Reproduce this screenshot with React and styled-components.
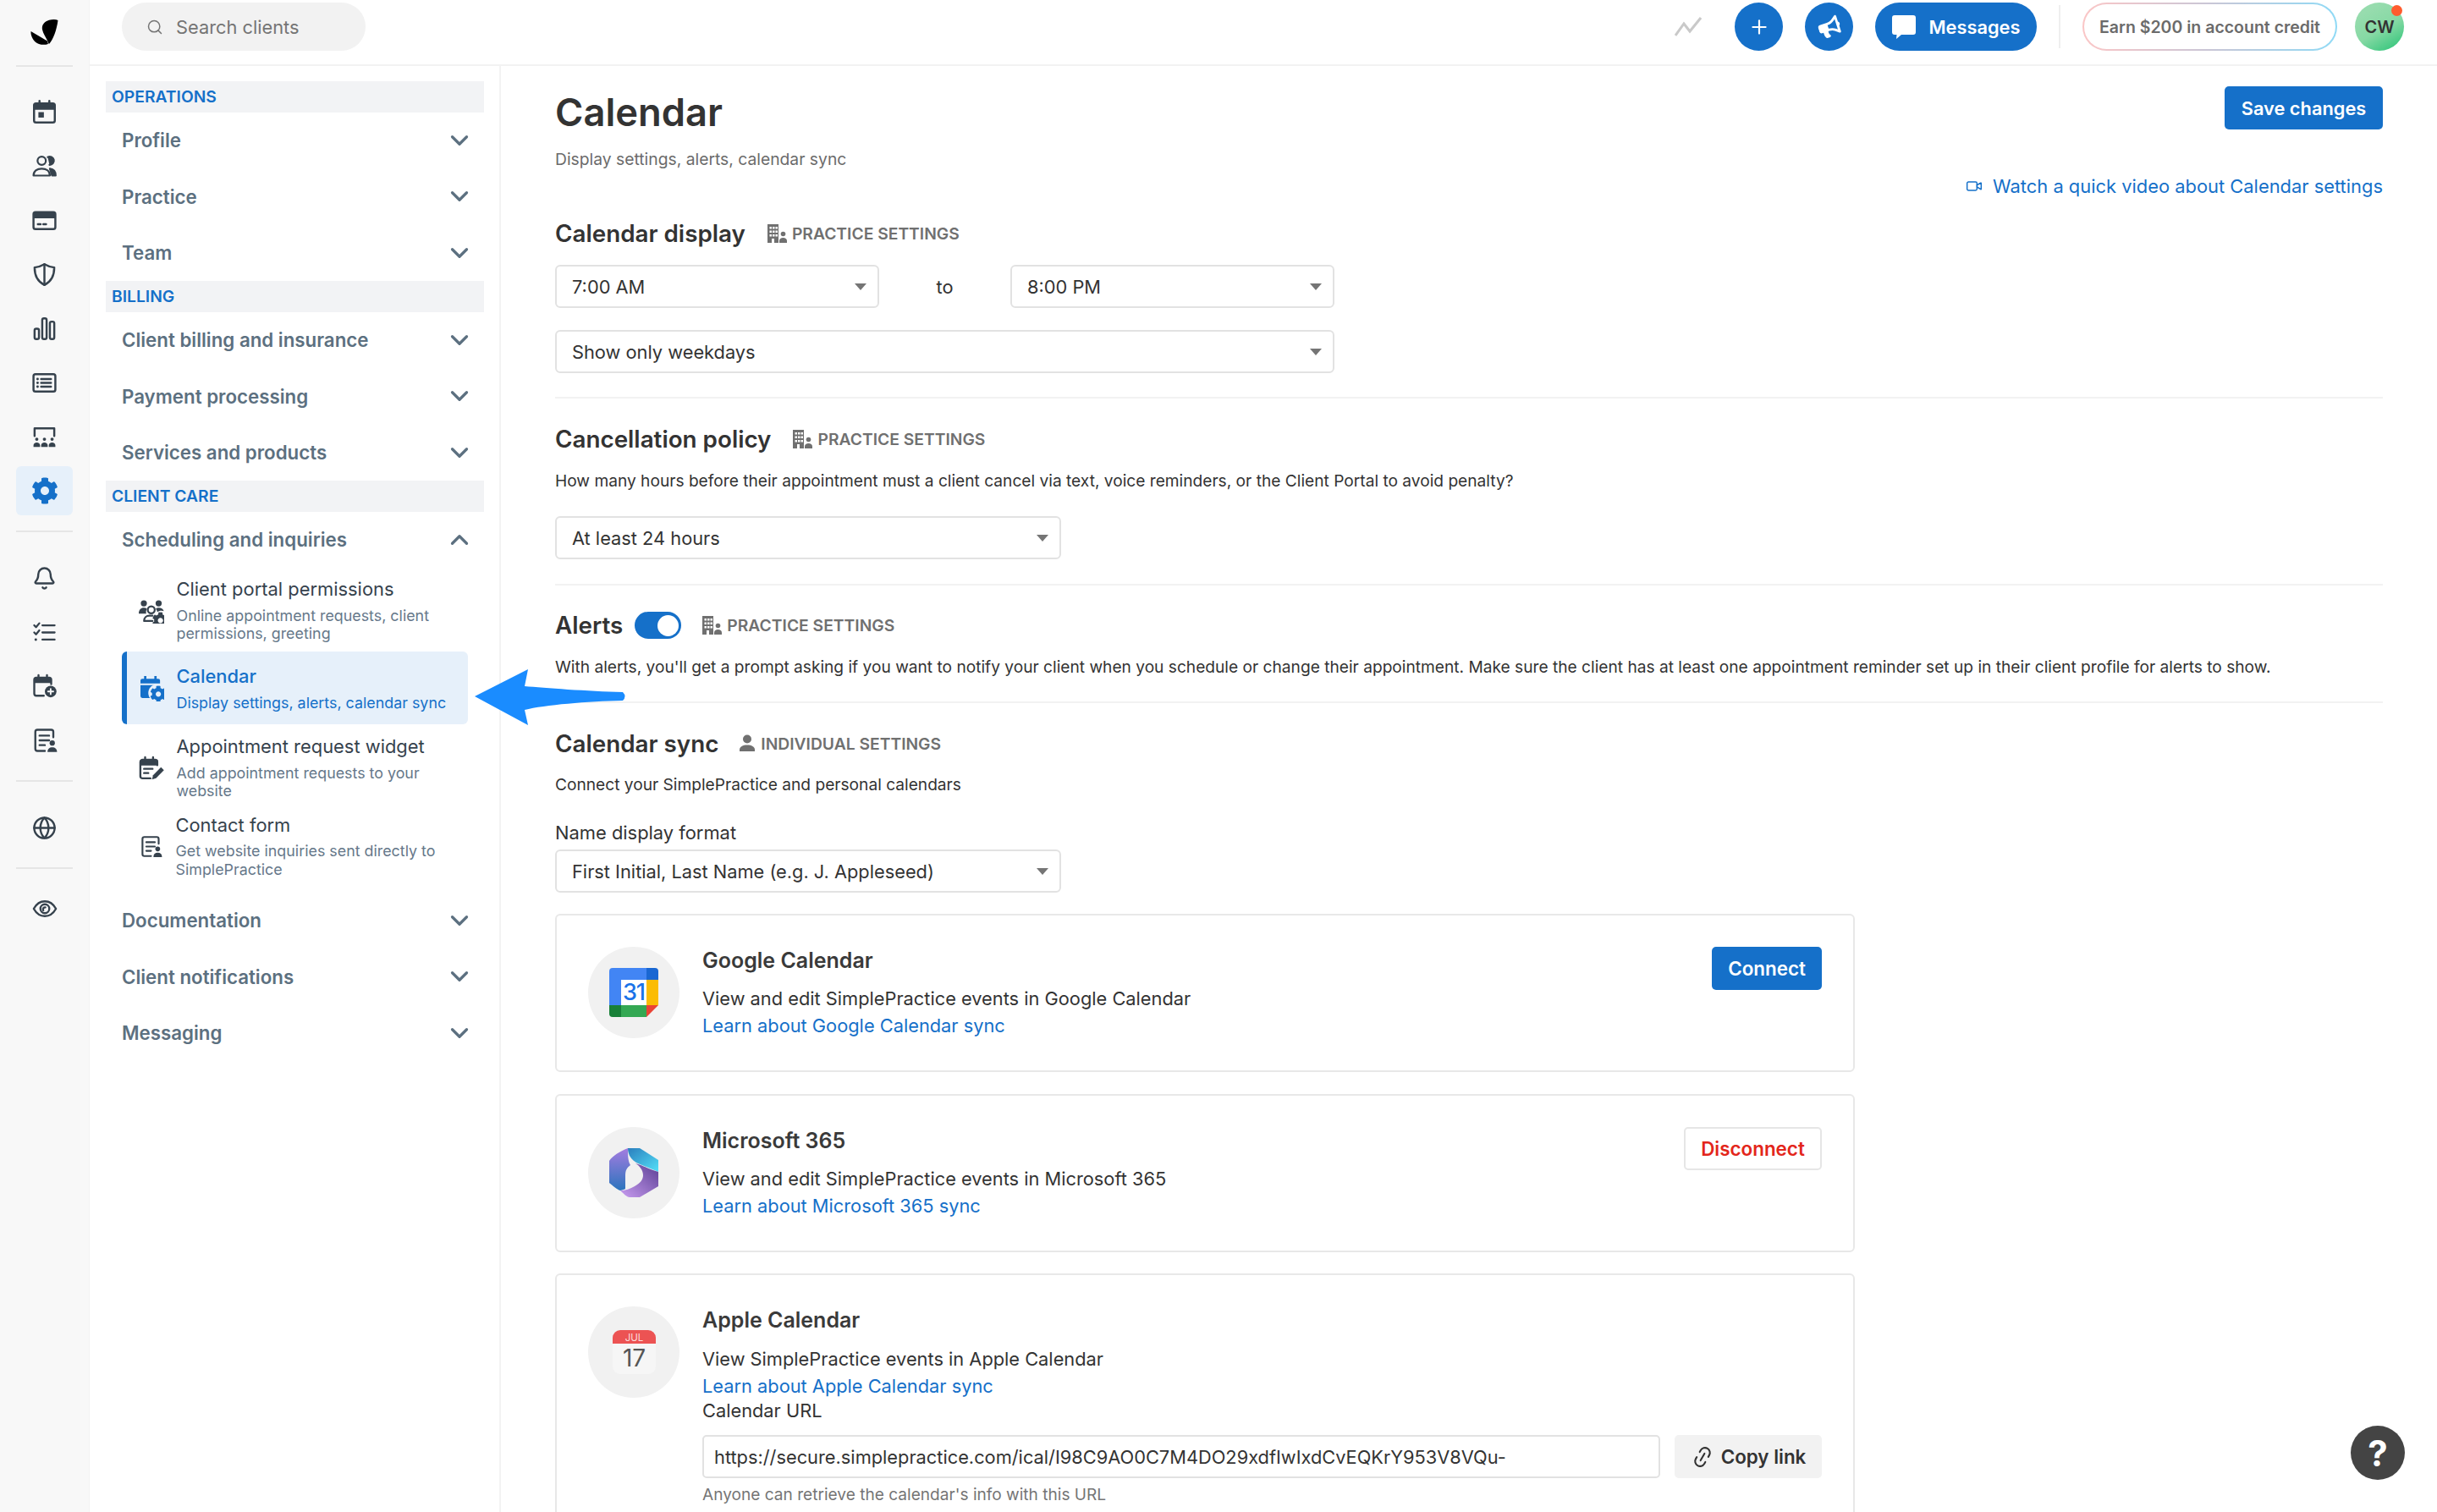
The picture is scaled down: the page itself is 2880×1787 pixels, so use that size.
import React from "react";
import styled, { createGlobalStyle } from "styled-components";
import { Search, Plus, ChevronDown, ChevronUp, Bell, Globe, Video, Link2 } from "lucide-react";
import { FaCog, FaBullhorn } from "react-icons/fa";

const BLUE = "#1570c9";
const FONT = `Inter, "Liberation Sans", sans-serif`;

const Global = createGlobalStyle`
  html, body { margin: 0; padding: 0; background: #fff; }
  body { font-family: ${FONT}; color: #333; overflow: hidden; }
  * { box-sizing: border-box; }
`;

const Page = styled.div`
  position: relative;
  display: flex;
  height: 100vh;
  overflow: hidden;
`;

/* left icon rail */
const Rail = styled.nav`
  flex: 0 0 106px;
  background: #f8f8f8;
  border-right: 1px solid #f3f3f3;
  display: flex;
  flex-direction: column;
  align-items: center;
  color: #36424d;
`;
const LogoBox = styled.div`
  height: 77px;
  width: 100%;
  display: flex;
  align-items: center;
  justify-content: center;
  padding-bottom: 1px;
`;
const RailDivider = styled.div`
  width: 67px;
  height: 2px;
  flex: none;
  background: #e6e6e6;
  margin: ${(p) => p.$m || "18px 0 25px"};
`;
const RailGroup = styled.div`
  display: flex;
  flex-direction: column;
  gap: 6px;
`;
const RailItem = styled.div`
  width: 67px;
  height: ${(p) => (p.$short ? "44px" : "58px")};
  display: flex;
  align-items: center;
  justify-content: center;
  border-radius: 6px;
  background: ${(p) => (p.$active ? "#e6f0fa" : "transparent")};
  color: ${(p) => (p.$active ? BLUE : "#36424d")};
`;

/* main column */
const Main = styled.div`
  flex: 1;
  min-width: 0;
  display: flex;
  flex-direction: column;
`;
const Topbar = styled.header`
  flex: 0 0 78px;
  border-bottom: 2px solid #f2f2f2;
  display: flex;
  align-items: flex-start;
  padding: 3px 39px 0 38px;
`;
const SearchPill = styled.div`
  width: 288px;
  height: 57px;
  border-radius: 29px;
  background: #f2f2f2;
  display: flex;
  align-items: center;
  padding-left: 29px;
  gap: 15px;
  color: #757575;
  font-size: 21.8px;
`;
const TopRight = styled.div`
  margin-left: auto;
  display: flex;
  align-items: center;
  height: 57px;
`;
const Trend = styled.svg`
  margin-right: 39px;
`;
const RoundBtn = styled.div`
  width: 57px;
  height: 57px;
  border-radius: 50%;
  background: ${BLUE};
  color: #fff;
  display: flex;
  align-items: center;
  justify-content: center;
  margin-right: 26px;
`;
const MessagesBtn = styled.div`
  width: 191px;
  height: 57px;
  border-radius: 29px;
  background: ${BLUE};
  color: #fff;
  display: flex;
  align-items: center;
  justify-content: center;
  gap: 16px;
  font-size: 21.8px;
  font-weight: 600;
`;
const TopDivider = styled.div`
  width: 2px;
  height: 51px;
  background: #efefef;
  margin: 0 26px;
`;
const EarnPill = styled.div`
  width: 301px;
  height: 57px;
  border-radius: 29px;
  border: 2px solid transparent;
  background: linear-gradient(#fff, #fff) padding-box,
    linear-gradient(90deg, #fbc6c6, #c9c6d6 50%, #8fdaf6) border-box;
  color: #6b6b6b;
  font-size: 19.5px;
  font-weight: 600;
  display: flex;
  align-items: center;
  justify-content: center;
`;
const Avatar = styled.div`
  position: relative;
  width: 58px;
  height: 57px;
  margin-left: 21px;
  border-radius: 50%;
  background: linear-gradient(150deg, #97dcae 20%, #86d9a4 55%, #25c274);
  color: #333;
  font-size: 20px;
  font-weight: 600;
  display: flex;
  align-items: center;
  justify-content: center;
`;
const RedDot = styled.span`
  position: absolute;
  top: 3px;
  right: 2px;
  width: 13px;
  height: 13px;
  border-radius: 50%;
  background: #ff5c2e;
`;

const Body = styled.div`
  flex: 1;
  min-height: 0;
  display: flex;
`;

/* settings navigation */
const SubNav = styled.aside`
  flex: 0 0 486px;
  border-right: 2px solid #f3f3f3;
  padding: 18px 18px 0 19px;
`;
const GroupHead = styled.div`
  height: 36.5px;
  background: #f2f3f5;
  color: ${BLUE};
  font-size: 19.3px;
  font-weight: 600;
  line-height: 37px;
  padding-left: 7px;
`;
const NavRow = styled.div`
  height: 66.5px;
  display: flex;
  align-items: center;
  justify-content: space-between;
  padding: 0 12px 0 19px;
  color: #5c7080;
  font-size: 22.3px;
  font-weight: 600;
`;
const SubList = styled.div`
  padding-bottom: 16.5px;
`;
const SubItem = styled.div`
  margin: 0 19px;
  display: flex;
  align-items: center;
  padding: ${(p) => p.$pad};
  border-radius: 6px;
  border-left: 6px solid ${(p) => (p.$active ? BLUE : "transparent")};
  background: ${(p) => (p.$active ? "#e6f0fa" : "transparent")};
`;
const SubIcon = styled.div`
  flex: 0 0 29px;
  margin: 0 14.5px 0 14px;
  display: flex;
  justify-content: center;
  color: ${(p) => (p.$active ? BLUE : "#36424d")};
`;
const SubTitle = styled.div`
  font-size: 21.9px;
  line-height: 24px;
  color: ${(p) => (p.$active ? BLUE : "#36424d")};
  font-weight: ${(p) => (p.$active ? 500 : 400)};
`;
const SubDesc = styled.div`
  margin-top: 8.5px;
  font-size: 17.85px;
  line-height: 21.5px;
  color: ${(p) => (p.$active ? BLUE : "#66788a")};
`;

/* content */
const Content = styled.main`
  flex: 1;
  min-width: 0;
  padding: 24px 64px 0 64px;
`;
const Header = styled.div`
  height: 132px;
  display: flex;
  justify-content: space-between;
`;
const TitleCol = styled.div``;
const Title = styled.h1`
  margin: 3px 0 0;
  font-size: 45.3px;
  line-height: 56px;
  font-weight: 600;
  color: #333;
`;
const Subtitle = styled.div`
  margin-top: 14px;
  font-size: 19.3px;
  line-height: 26px;
  color: #6b6b6b;
`;
const ActionCol = styled.div`
  display: flex;
  flex-direction: column;
  align-items: flex-end;
  justify-content: space-between;
`;
const SaveBtn = styled.div`
  width: 187px;
  height: 51px;
  border-radius: 5px;
  background: ${BLUE};
  color: #fff;
  font-size: 21.8px;
  font-weight: 600;
  display: flex;
  align-items: center;
  justify-content: center;
`;
const WatchLink = styled.div`
  display: flex;
  align-items: center;
  gap: 12px;
  color: ${BLUE};
  font-size: 21.9px;
  line-height: 28px;
`;
const SectionHead = styled.div`
  display: flex;
  align-items: center;
  height: 32px;
  margin-top: ${(p) => p.$mt || 0}px;
`;
const H2 = styled.h2`
  margin: 0;
  font-size: 27.8px;
  font-weight: 600;
  line-height: 32px;
  color: #333;
`;
const Scope = styled.div`
  display: flex;
  align-items: center;
  margin-left: ${(p) => p.$ml || 25}px;
  gap: 6px;
  color: #707070;
  font-size: 19.3px;
  font-weight: 600;
`;
const Help = styled.p`
  margin: ${(p) => p.$mt || 20}px 0 0;
  font-size: 19.15px;
  line-height: 26px;
  color: #333;
`;
const SelectBox = styled.div`
  width: ${(p) => p.$w}px;
  height: 51px;
  border: 2px solid #e2e2e2;
  border-radius: 6px;
  padding: 0 19px 0 18px;
  display: flex;
  align-items: center;
  justify-content: space-between;
  font-size: 21.8px;
  color: #333;
  background: #fff;
  flex: none;
  margin-top: ${(p) => p.$mt || 0}px;
  &::after {
    content: "";
    border-left: 7.5px solid transparent;
    border-right: 7.5px solid transparent;
    border-top: 8px solid #757575;
    margin-right: -6px;
  }
`;
const TimeRow = styled.div`
  display: flex;
  align-items: center;
  margin-top: 21px;
`;
const ToLabel = styled.div`
  width: 155px;
  text-align: center;
  font-size: 21.8px;
  color: #333;
`;
const Section = styled.section`
  padding-bottom: ${(p) => p.$pb}px;
  border-bottom: ${(p) => (p.$plain ? "none" : "2px solid #f2f2f2")};
`;
const Toggle = styled.div`
  width: 55px;
  height: 32px;
  margin-left: 14px;
  border-radius: 16px;
  background: ${BLUE};
  display: flex;
  align-items: center;
  justify-content: flex-end;
  padding-right: 3.5px;
  &::after {
    content: "";
    width: 25px;
    height: 25px;
    border-radius: 50%;
    background: #fff;
  }
`;
const FieldLabel = styled.div`
  margin: 30px 0 6px;
  font-size: 21.9px;
  line-height: 28px;
  color: #333;
`;
const Card = styled.div`
  width: 1536px;
  margin-top: ${(p) => p.$mt}px;
  border: 2px solid #e8e8e8;
  border-radius: 6px;
  padding: 37px;
  display: flex;
  gap: 27px;
`;
const LogoCircle = styled.div`
  flex: 0 0 108px;
  height: 108px;
  border-radius: 50%;
  background: #f1f1f1;
  display: flex;
  align-items: center;
  justify-content: center;
`;
const CardBody = styled.div`
  flex: 1;
  min-width: 0;
`;
const CardTop = styled.div`
  display: flex;
  justify-content: space-between;
  align-items: flex-start;
`;
const CardTitle = styled.div`
  font-size: 25px;
  font-weight: 600;
  line-height: 32px;
  color: #3a3a3a;
`;
const CardText = styled.div`
  margin-top: ${(p) => p.$mt || 0}px;
  font-size: 21.8px;
  line-height: 32px;
  color: #333;
`;
const CardLink = styled(CardText)`
  color: ${BLUE};
`;
const UrlLabel = styled(CardText)`
  line-height: 26px;
`;
const ConnectBtn = styled.div`
  width: 130px;
  height: 51px;
  border-radius: 5px;
  background: ${BLUE};
  color: #fff;
  font-size: 22.4px;
  font-weight: 600;
  display: flex;
  align-items: center;
  justify-content: center;
`;
const DisconnectBtn = styled(ConnectBtn)`
  width: 163px;
  background: #fff;
  border: 2px solid #e6e6e6;
  color: #e3261b;
`;
const UrlRow = styled.div`
  display: flex;
  gap: 17px;
  margin-top: 16px;
`;
const UrlInput = styled.div`
  flex: 1;
  height: 51px;
  border: 2px solid #e2e2e2;
  border-radius: 5px;
  padding: 0 12px;
  display: flex;
  align-items: center;
  font-size: 21.8px;
  color: #333;
  white-space: nowrap;
  overflow: hidden;
`;
const CopyBtn = styled.div`
  flex: 0 0 174px;
  height: 51px;
  border-radius: 5px;
  background: #f2f2f2;
  color: #333;
  font-size: 22.4px;
  font-weight: 600;
  display: flex;
  align-items: center;
  justify-content: center;
  gap: 8px;
`;
const Hint = styled.div`
  margin-top: 6px;
  font-size: 19.1px;
  line-height: 26px;
  color: #757575;
`;

/* overlays */
const ArrowMark = styled.svg`
  position: absolute;
  left: 559px;
  top: 786px;
`;
const HelpFab = styled.div`
  position: absolute;
  left: 2778px;
  top: 1685px;
  width: 64px;
  height: 64px;
  border-radius: 50%;
  background: #444;
  color: #fff;
  font-size: 42px;
  font-weight: 700;
  display: flex;
  align-items: center;
  justify-content: center;
`;

/* drawings */
const Ico = ({ s = 31, children, ...r }) => (
  <svg width={s} height={s} viewBox="0 0 24 24" fill="none" stroke="currentColor" strokeWidth="1.9" strokeLinecap="round" strokeLinejoin="round" {...r}>
    {children}
  </svg>
);

const Logo = () => (
  <svg width="34" height="31" viewBox="0 0 34 31" fill="#000">
    <path d="M32.5 1C30 -.3 26 -.3 22 .8 16 2.5 13 7 14 12c1 5 4 8.5 6.5 14 .5 1.500 1 2.500 1.500 3 5-5 9-17 10.500-28z" />
    <path d="M.5 14 20 25.500c.5 1.500.8 2.500.8 3.500-2.800 1-6.800 1.300-10.800 0C4 27 0 20 .5 14z" />
  </svg>
);

const CalIco = () => (
  <Ico>
    <rect x="2.5" y="4" width="19" height="17.5" rx="1.8" />
    <path d="M3 5.5h18v3.5H3z" fill="currentColor" />
    <path d="M7.5 1.8V4.5M16.5 1.8V4.5" />
    <rect x="6.5" y="12" width="5" height="5" fill="currentColor" stroke="none" />
  </Ico>
);
const ClientsIco = () => (
  <Ico strokeWidth="1.7">
    <circle cx="9.5" cy="7" r="3.8" />
    <path d="M2 20.5c0-4 3.2-6.3 7.5-6.3s7.5 2.3 7.5 6.3z" />
    <path d="M15 3.6a3.8 3.8 0 1 1 1.6 7.1" fill="currentColor" />
    <path d="M17 14.2c2.8.4 5.3 2.4 5.3 6.3H19z" fill="currentColor" />
  </Ico>
);
const CardIco = () => (
  <Ico>
    <rect x="2" y="4.5" width="20" height="15.5" rx="1.8" />
    <path d="M2.5 6h19v3.2h-19z" fill="currentColor" />
    <path d="M6 15.5h2.5M11 15.5h2.5" />
  </Ico>
);
const ShieldIco = () => (
  <Ico>
    <path d="M12 2.500c3 1.800 6 2.700 9 3 0 7.500-2.500 13-9 16-6.500-3-9-8.500-9-16 3-.3 6-1.200 9-3z" />
    <path d="M12 2.500v19" />
  </Ico>
);
const BarsIco = () => (
  <Ico>
    <rect x="3" y="12" width="4" height="9.500" rx="1.600" />
    <rect x="10" y="2.500" width="4" height="19" rx="1.600" />
    <rect x="17" y="5.500" width="4" height="16" rx="1.600" />
  </Ico>
);
const ListIco = () => (
  <Ico>
    <rect x="2" y="4" width="20" height="16" rx="1.800" />
    <path d="M9 8.500h9M9 12h9M9 15.500h9" />
    <path d="M5.700 8.500h.1M5.700 12h.1M5.700 15.500h.1" strokeWidth="2.200" />
  </Ico>
);
const TeamIco = () => (
  <Ico>
    <path d="M3 11V4h18v7" />
    <g fill="currentColor" stroke="none">
      <circle cx="5" cy="14" r="1.500" /><circle cx="12" cy="14" r="1.500" /><circle cx="19" cy="14" r="1.500" />
      <path d="M2 21v-1.500C2 18 3.300 17 5 17s3 1 3 2.500V21zM9 21v-1.500C9 18 10.300 17 12 17s3 1 3 2.500V21zM16 21v-1.500C16 18 17.300 17 19 17s3 1 3 2.500V21z" />
    </g>
  </Ico>
);
const TasksIco = () => (
  <Ico s={29}>
    <path d="M10 5h12M10 12h12M10 19h12" />
    <path d="M2 5l1.800 1.800L7 3M2 12l1.800 1.800L7 10" />
    <path d="M3.500 19h.1" strokeWidth="2.400" />
  </Ico>
);
const CalPlusIco = () => (
  <Ico s={30}>
    <path d="M11 21H4a2 2 0 0 1-2-2V6a2 2 0 0 1 2-2h12a2 2 0 0 1 2 2v4" />
    <path d="M2.500 5h15v3h-15z" fill="currentColor" />
    <path d="M6 1.500V4M14 1.500V4" />
    <circle cx="17.500" cy="17" r="5.500" fill="currentColor" stroke="none" />
    <path d="M17.500 14.500v5M15 17h5" stroke="#f8f8f8" strokeWidth="1.500" />
  </Ico>
);
const DocPersonIco = ({ s = 30 }) => (
  <Ico s={s}>
    <path d="M20 9V4a2 2 0 0 0-2-2H5a2 2 0 0 0-2 2v16a2 2 0 0 0 2 2h7" />
    <path d="M7 7.500h9M7 12h9M7 16.500h5" />
    <circle cx="19" cy="14.500" r="2.500" fill="currentColor" stroke="none" />
    <path d="M14.500 23c0-3 1.800-4.500 4.500-4.500s4.500 1.500 4.500 4.500z" fill="currentColor" stroke="none" />
  </Ico>
);
const EyeIco = () => (
  <Ico s={30}>
    <path d="M1.500 12C4 7.500 7.800 5 12 5s8 2.500 10.500 7C20 16.500 16.200 19 12 19S4 16.500 1.500 12z" />
    <circle cx="12" cy="12" r="4.200" />
    <path d="M10.500 13.500c-.8-1.500.5-3 2-2.800" />
  </Ico>
);
const PortalIco = () => (
  <Ico s={30} strokeWidth="1.800">
    <g fill="currentColor" stroke="none">
      <circle cx="4.800" cy="4.800" r="2.900" />
      <path d="M0 14.500c0-3.500 2-5.500 4.800-5.500 1.100 0 2.100.3 3 .9-.9 1.200-1.200 3-.7 4.600z" />
      <circle cx="18.800" cy="4.800" r="2.900" />
      <path d="M16 9.900c.8-.6 1.800-.9 2.800-.9 2.500 0 4.200 1.200 4.900 3.200-2-.8-4.700-.4-6.200 1-.1-1.200-.6-2.400-1.500-3.300z" />
    </g>
    <circle cx="11.800" cy="11" r="3.300" />
    <path d="M5 21.500c0-3.200 2.300-5 5-5h3M5 21.500h8" />
    <FaCog x="12.500" y="13" width="11" height="11" stroke="none" />
  </Ico>
);
const CalGearIco = () => (
  <svg width="30" height="30" viewBox="0 0 24 24" fill="currentColor" stroke="none">
    <path d="M5 0h2.200v2.500h7.500V0h2.200v2.500h1.500a1.700 1.700 0 0 1 1.700 1.700V7H1.600V4.200a1.700 1.700 0 0 1 1.700-1.700H5z" />
    <path d="M1.600 8.500h18.500V19a1.700 1.700 0 0 1-1.700 1.700H3.300A1.700 1.700 0 0 1 1.600 19z" />
    <circle cx="17.500" cy="16" r="8.500" fill="#e6f0fa" />
    <FaCog x="10.500" y="9" width="14" height="14" />
  </svg>
);
const CalEditIco = () => (
  <Ico s={30} strokeWidth="1.900">
    <path d="M11 21.500H3.500a2 2 0 0 1-2-2V6a2 2 0 0 1 2-2h12a2 2 0 0 1 2 2v3" />
    <path d="M2 5h15v3.500H2z" fill="currentColor" />
    <path d="M6 1.500V4M13.500 1.500V4M5 12.500h8M5 16.500h4" />
    <path d="M12.500 22.500l1-4 7.500-7.500 2.800 2.800-7.500 7.500z" fill="currentColor" stroke="none" />
  </Ico>
);
const ScopeBuilding = () => (
  <svg width="24" height="24" viewBox="0 0 24 24" fill="#707070">
    <path fillRule="evenodd" d="M1 1h13v22H9v-5H6v5H1zM3.500 4v2.500H6V4zM7 4v2.500h2.500V4zM10.500 4v2.500H13V4zM3.500 8.500V11H6V8.500zM7 8.500V11h2.500V8.500zM10.500 8.500V11H13V8.500zM3.500 13v2.500H6V13zM7 13v2.500h2.500V13zM10.500 13v2.500H13V13z" />
    <circle cx="19.500" cy="12.500" r="2.800" />
    <path d="M15 23v-2.500c0-2.300 2-3.500 4.500-3.500s4.500 1.200 4.500 3.500V23z" />
  </svg>
);
const ScopePerson = () => (
  <svg width="20" height="24" viewBox="0 0 20 24" fill="#707070">
    <circle cx="10" cy="6.500" r="5" />
    <path d="M1 21v-2c0-3.500 4-5.500 9-5.500s9 2 9 5.500v2z" />
  </svg>
);
const BubbleIco = () => (
  <svg width="28" height="28" viewBox="0 0 28 28" fill="#fff">
    <path d="M3 0h22a3 3 0 0 1 3 3v17a3 3 0 0 1-3 3H11l-6 5 .5-5H3a3 3 0 0 1-3-3V3a3 3 0 0 1 3-3z" />
  </svg>
);
const GoogleCal = () => (
  <svg width="58" height="58" viewBox="0 0 58 58">
    <path d="M4 0h40v14H14v30H0V4a4 4 0 0 1 4-4z" fill="#4285f4" />
    <path d="M44 0h10a4 4 0 0 1 4 4v10H44z" fill="#1967d2" />
    <rect x="14" y="14" width="30" height="30" fill="#fff" />
    <rect x="44" y="14" width="14" height="30" fill="#fbbc04" />
    <path d="M14 44h30v14H14z" fill="#34a853" />
    <path d="M0 44h14v14H4a4 4 0 0 1-4-4z" fill="#188038" />
    <path d="M44 44h14L44 58z" fill="#ea4335" />
    <text x="29" y="38" textAnchor="middle" fontFamily={FONT} fontSize="27" fontWeight="500" fill="#1a73e8" letterSpacing="-1">31</text>
  </svg>
);
const M365 = () => (
  <svg width="58" height="58" viewBox="0 0 58 58">
    <defs>
      <linearGradient id="ma" x1="0" y1="0" x2="1" y2="1"><stop offset="0" stopColor="#2b7fbe" /><stop offset="1" stopColor="#54e0f8" /></linearGradient>
      <linearGradient id="mb" x1="0" y1="0" x2="0" y2="1"><stop offset="0" stopColor="#a47ce0" /><stop offset="1" stopColor="#2b74bd" /></linearGradient>
      <linearGradient id="mc" x1="0" y1="1" x2="1" y2="0"><stop offset="0" stopColor="#c89cf0" /><stop offset="1" stopColor="#5b3f94" /></linearGradient>
    </defs>
    <path d="M22 0h14l22 14v14L34 18C26 14 22 8 22 0z" fill="url(#ma)" />
    <path d="M22 0C12 4 4 9 0 15v26c4 3 9 8 13 9 3-1 5-1 6-2 0-2 0-16 0-16 0-6 2-9 6-12-3-5-3-12-3-20z" fill="url(#mb)" />
    <path d="M31 18c8 2 14 6 27 10v17L36 58H24c-3 0-8-5-11-8 6 0 12-2 17-5 7-4 10-8 10-13 0-6-4-11-9-14z" fill="url(#mc)" />
  </svg>
);
const AppleCal = () => (
  <svg width="51" height="52" viewBox="0 0 51 52">
    <rect width="51" height="52" rx="9" fill="#f6f6f6" />
    <path d="M9 0h33a9 9 0 0 1 9 9v7H0V9a9 9 0 0 1 9-9z" fill="#ec5353" />
    <text x="25.500" y="12.500" textAnchor="middle" fontFamily={FONT} fontSize="11.500" fill="#fbdcdc">JUL</text>
    <text x="25.500" y="43" textAnchor="middle" fontFamily={FONT} fontSize="28" fill="#555">17</text>
  </svg>
);

const NavLine = ({ label, open }) => (
  <NavRow>
    {label}
    {open ? <ChevronUp size={34} strokeWidth={2.3} /> : <ChevronDown size={34} strokeWidth={2.3} />}
  </NavRow>
);

const SubEntry = ({ icon, title, desc, pad, active }) => (
  <SubItem $pad={pad} $active={active}>
    <SubIcon $active={active}>{icon}</SubIcon>
    <div>
      <SubTitle $active={active}>{title}</SubTitle>
      <SubDesc $active={active}>{desc}</SubDesc>
    </div>
  </SubItem>
);

const ScopeTag = ({ ml, person, children }) => (
  <Scope $ml={ml}>
    {person ? <ScopePerson /> : <ScopeBuilding />}
    {children}
  </Scope>
);

export default function App() {
  return (
    <Page>
      <Global />
      <Rail>
        <LogoBox><Logo /></LogoBox>
        <RailDivider $m="0 0 24px" />
        <RailGroup>
          <RailItem><CalIco /></RailItem>
          <RailItem><ClientsIco /></RailItem>
          <RailItem><CardIco /></RailItem>
          <RailItem><ShieldIco /></RailItem>
          <RailItem><BarsIco /></RailItem>
          <RailItem><ListIco /></RailItem>
          <RailItem><TeamIco /></RailItem>
          <RailItem $active><FaCog size={32} /></RailItem>
        </RailGroup>
        <RailDivider />
        <RailGroup>
          <RailItem><Bell size={29} strokeWidth={2} /></RailItem>
          <RailItem><TasksIco /></RailItem>
          <RailItem><CalPlusIco /></RailItem>
          <RailItem><DocPersonIco /></RailItem>
        </RailGroup>
        <RailDivider />
        <RailItem><Globe size={29} strokeWidth={2} /></RailItem>
        <RailDivider />
        <RailItem $short><EyeIco /></RailItem>
      </Rail>

      <Main>
        <Topbar>
          <SearchPill><Search size={20} strokeWidth={1.8} />Search clients</SearchPill>
          <TopRight>
            <Trend width="32" height="24" viewBox="0 0 32 24" fill="none" stroke="#c9c9c9" strokeWidth="3">
              <path d="M1 22 L11 8 L18 17 L31 1" />
            </Trend>
            <RoundBtn><Plus size={26} strokeWidth={2} /></RoundBtn>
            <RoundBtn><FaBullhorn size={26} style={{ transform: "rotate(-18deg)" }} /></RoundBtn>
            <MessagesBtn><BubbleIco />Messages</MessagesBtn>
            <TopDivider />
            <EarnPill>Earn $200 in account credit</EarnPill>
            <Avatar>CW<RedDot /></Avatar>
          </TopRight>
        </Topbar>
        <Body>
          <SubNav>
            <GroupHead>OPERATIONS</GroupHead>
            <NavLine label="Profile" />
            <NavLine label="Practice" />
            <NavLine label="Team" />
            <GroupHead>BILLING</GroupHead>
            <NavLine label="Client billing and insurance" />
            <NavLine label="Payment processing" />
            <NavLine label="Services and products" />
            <GroupHead>CLIENT CARE</GroupHead>
            <NavLine label="Scheduling and inquiries" open />
            <SubList>
              <SubEntry pad="13px 0 10.5px" icon={<PortalIco />} title="Client portal permissions" desc={<>Online appointment requests, client<br />permissions, greeting</>} />
              <SubEntry active pad="17px 0 14.500px" icon={<CalGearIco />} title="Calendar" desc="Display settings, alerts, calendar sync" />
              <SubEntry pad="14.500px 0 2.500px" icon={<CalEditIco />} title="Appointment request widget" desc={<>Add appointment requests to your<br />website</>} />
              <SubEntry pad="14.500px 0 0" icon={<DocPersonIco s={27} />} title="Contact form" desc={<>Get website inquiries sent directly to<br />SimplePractice</>} />
            </SubList>
            <NavLine label="Documentation" />
            <NavLine label="Client notifications" />
            <NavLine label="Messaging" />
          </SubNav>

          <Content>
            <Header>
              <TitleCol>
                <Title>Calendar</Title>
                <Subtitle>Display settings, alerts, calendar sync</Subtitle>
              </TitleCol>
              <ActionCol>
                <SaveBtn>Save changes</SaveBtn>
                <WatchLink><Video size={20} strokeWidth={1.8} />Watch a quick video about Calendar settings</WatchLink>
              </ActionCol>
            </Header>

            <Section $pb={28}>
              <SectionHead $mt={26}><H2>Calendar display</H2><ScopeTag>PRACTICE SETTINGS</ScopeTag></SectionHead>
              <TimeRow>
                <SelectBox $w={383}>7:00 AM</SelectBox>
                <ToLabel>to</ToLabel>
                <SelectBox $w={383}>8:00 PM</SelectBox>
              </TimeRow>
              <SelectBox $w={921} $mt={26}>Show only weekdays</SelectBox>
            </Section>

            <Section $pb={29}>
              <SectionHead $mt={32}><H2>Cancellation policy</H2><ScopeTag>PRACTICE SETTINGS</ScopeTag></SectionHead>
              <Help>How many hours before their appointment must a client cancel via text, voice reminders, or the Client Portal to avoid penalty?</Help>
              <SelectBox $w={598} $mt={29}>At least 24 hours</SelectBox>
            </Section>

            <Section $pb={28}>
              <SectionHead $mt={31}><H2>Alerts</H2><Toggle /><ScopeTag ml={24}>PRACTICE SETTINGS</ScopeTag></SectionHead>
              <Help $mt={20}>With alerts, you'll get a prompt asking if you want to notify your client when you schedule or change their appointment. Make sure the client has at least one appointment reminder set up in their client profile for alerts to show.</Help>
            </Section>

            <Section $pb={0} $plain>
              <SectionHead $mt={32}><H2>Calendar sync</H2><ScopeTag person ml={24}>INDIVIDUAL SETTINGS</ScopeTag></SectionHead>
              <Help $mt={19}>Connect your SimplePractice and personal calendars</Help>
              <FieldLabel>Name display format</FieldLabel>
              <SelectBox $w={598}>First Initial, Last Name (e.g. J. Appleseed)</SelectBox>
            </Section>

            <Card $mt={25}>
              <LogoCircle><GoogleCal /></LogoCircle>
              <CardBody>
                <CardTop>
                  <div>
                    <CardTitle>Google Calendar</CardTitle>
                    <CardText $mt={13}>View and edit SimplePractice events in Google Calendar</CardText>
                    <CardLink>Learn about Google Calendar sync</CardLink>
                  </div>
                  <ConnectBtn>Connect</ConnectBtn>
                </CardTop>
              </CardBody>
            </Card>

            <Card $mt={26}>
              <LogoCircle><M365 /></LogoCircle>
              <CardBody>
                <CardTop>
                  <div>
                    <CardTitle>Microsoft 365</CardTitle>
                    <CardText $mt={13}>View and edit SimplePractice events in Microsoft 365</CardText>
                    <CardLink>Learn about Microsoft 365 sync</CardLink>
                  </div>
                  <DisconnectBtn>Disconnect</DisconnectBtn>
                </CardTop>
              </CardBody>
            </Card>

            <Card $mt={25}>
              <LogoCircle><AppleCal /></LogoCircle>
              <CardBody>
                <CardTitle>Apple Calendar</CardTitle>
                <CardText $mt={14}>View SimplePractice events in Apple Calendar</CardText>
                <CardLink>Learn about Apple Calendar sync</CardLink>
                <UrlLabel>Calendar URL</UrlLabel>
                <UrlRow>
                  <UrlInput>https://secure.simplepractice.com/ical/I98C9AO0C7M4DO29xdfIwIxdCvEQKrY953V8VQu-</UrlInput>
                  <CopyBtn><Link2 size={28} strokeWidth={1.8} style={{ transform: "rotate(-60deg)" }} />Copy link</CopyBtn>
                </UrlRow>
                <Hint>Anyone can retrieve the calendar's info with this URL</Hint>
              </CardBody>
            </Card>
          </Content>
        </Body>
      </Main>

      <ArrowMark width="184" height="76" viewBox="0 0 184 76">
        <path d="M2 37 L65 5 L61 25 C85 27 135 31 177 32 Q182 37 177 42 C135 43 85 47 61 53 L65 71 Z" fill="#1a8cff" />
      </ArrowMark>
      <HelpFab>?</HelpFab>
    </Page>
  );
}
